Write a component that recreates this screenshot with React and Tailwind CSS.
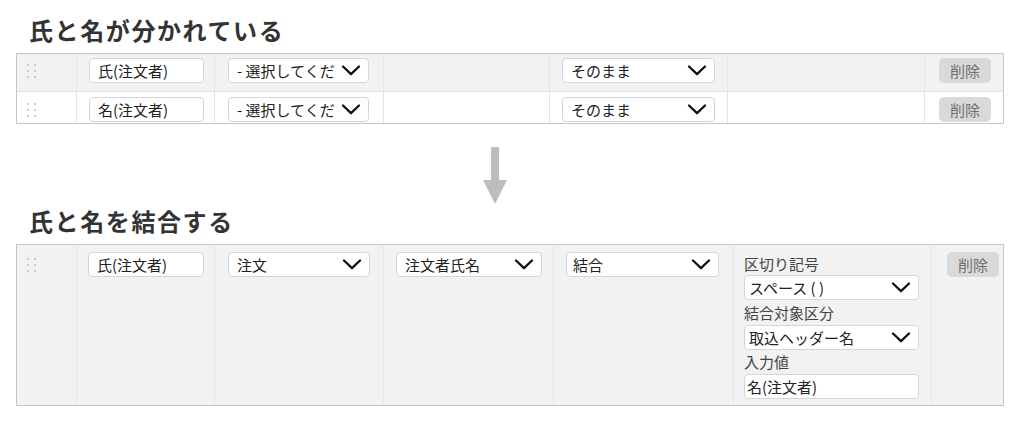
import React from "react";

const FONT = { fontFamily: '"Noto Sans CJK JP", "Noto Sans", sans-serif' };

function Chevron() {
  return (
    <svg width="20" height="11" viewBox="0 0 20 11" className="shrink-0">
      <path d="M2 1.5 L10 9.2 L18 1.5" stroke="#111" strokeWidth="2.3" fill="none" strokeLinecap="round" strokeLinejoin="round" />
    </svg>
  );
}

function Select({ text, w, pl = "pl-[8px]" }) {
  return (
    <div className={`flex items-center justify-between h-[25px] border border-[#cfd6de] rounded-[4px] bg-white ${pl} pr-[7px] text-[15px] text-[#222] leading-[23px] overflow-hidden whitespace-nowrap ${w}`}>
      <span>{text}</span>
      <Chevron />
    </div>
  );
}

function Input({ text, w, pl = "pl-[8px]" }) {
  return (
    <div className={`flex items-center h-[25px] border border-[#cfd6de] rounded-[4px] bg-white ${pl} text-[15px] text-[#222] leading-[23px] whitespace-nowrap ${w}`}>
      {text}
    </div>
  );
}

function Dots() {
  return (
    <div className="h-[25px] flex items-center pl-[10px]">
      <div className="grid grid-cols-2 gap-x-[5px] gap-y-[4px]">
        {[0, 1, 2, 3, 4, 5].map((i) => (
          <div key={i} className="w-[2px] h-[2px] rounded-full bg-[#bdbdbd]" />
        ))}
      </div>
    </div>
  );
}

function DeleteBtn() {
  return (
    <div className="w-[52px] h-[25px] rounded-[5px] bg-[#d9d9d9] text-[#707070] text-[15px] leading-[25px] flex items-center justify-center">
      削除
    </div>
  );
}

function TopRow({ name, bg, h, pt, last }) {
  const cell = `border-r border-[#e6e6e6] ${pt}`;
  return (
    <div className={`flex ${bg} ${h} ${last ? "" : "border-b border-[#e3e3e3]"}`}>
      <div className={`w-[60px] ${cell}`}>
        <Dots />
      </div>
      <div className={`w-[138px] pl-[12px] ${cell}`}>
        <Input text={name} w="w-[115px]" />
      </div>
      <div className={`w-[169px] pl-[13px] ${cell}`}>
        <Select text="- 選択してくだ" w="w-[141px]" />
      </div>
      <div className={`w-[166px] ${cell}`} />
      <div className={`w-[178px] pl-[12px] ${cell}`}>
        <Select text="そのまま" w="w-[153px]" />
      </div>
      <div className={`w-[197px] ${cell}`} />
      <div className={`w-[78px] pl-[14px] ${pt}`}>
        <DeleteBtn />
      </div>
    </div>
  );
}

function Heading({ children, className = "" }) {
  return (
    <div className={`pl-[29px] text-[24px] leading-[25px] h-[25px] font-bold text-[#333] tracking-[1.6px] ${className}`}>
      {children}
    </div>
  );
}

export default function App() {
  const cell = "border-r border-[#e6e6e6] pt-[7px]";
  return (
    <div className="w-[1024px] h-[425px] bg-white overflow-hidden pt-[17px]" style={FONT}>
      <Heading>氏と名が分かれている</Heading>

      <div className="ml-[16px] mt-[11px] w-[988px] border border-[#c6c6c6]">
        <TopRow name="氏(注文者)" bg="bg-[#f2f2f2]" h="h-[38px]" pt="pt-[4px]" />
        <TopRow name="名(注文者)" bg="bg-white" h="h-[31px]" pt="pt-[5px]" last />
      </div>

      <div className="mt-[23px] ml-[483px] w-[24px] h-[57px]">
        <svg width="24" height="57" viewBox="0 0 24 57">
          <rect x="8" y="0" width="8" height="34" fill="#bdbdbd" />
          <polygon points="0,33 24,33 12,57" fill="#bdbdbd" />
        </svg>
      </div>

      <Heading className="mt-[4px]">氏と名を結合する</Heading>

      <div className="ml-[16px] mt-[11px] w-[988px] border border-[#c6c6c6]">
        <div className="flex bg-[#f2f2f2] h-[160px]">
          <div className={`w-[60px] ${cell}`}>
            <Dots />
          </div>
          <div className={`w-[138px] pl-[11px] ${cell}`}>
            <Input text="氏(注文者)" w="w-[116px]" />
          </div>
          <div className={`w-[169px] pl-[13px] ${cell}`}>
            <Select text="注文" w="w-[142px]" />
          </div>
          <div className={`w-[170px] pl-[12px] ${cell}`}>
            <Select text="注文者氏名" w="w-[146px]" />
          </div>
          <div className={`w-[180px] pl-[12px] ${cell}`}>
            <Select text="結合" w="w-[153px]" pl="pl-[6px]" />
          </div>
          <div className={`w-[198px] pl-[10px] ${cell} flex flex-col`}>
            <div className="h-[23px] leading-[23px] text-[15px] text-[#444]">区切り記号</div>
            <Select text="スペース ( )" w="w-[175px]" pl="pl-[4px]" />
            <div className="h-[25px] leading-[25px] text-[15px] text-[#444]">結合対象区分</div>
            <Select text="取込ヘッダー名" w="w-[175px]" pl="pl-[4px]" />
            <div className="h-[24px] leading-[24px] text-[15px] text-[#444]">入力値</div>
            <Input text="名(注文者)" w="w-[175px]" pl="pl-[2px]" />
          </div>
          <div className="w-[71px] pl-[15px] pt-[7px]">
            <DeleteBtn />
          </div>
        </div>
      </div>
    </div>
  );
}
